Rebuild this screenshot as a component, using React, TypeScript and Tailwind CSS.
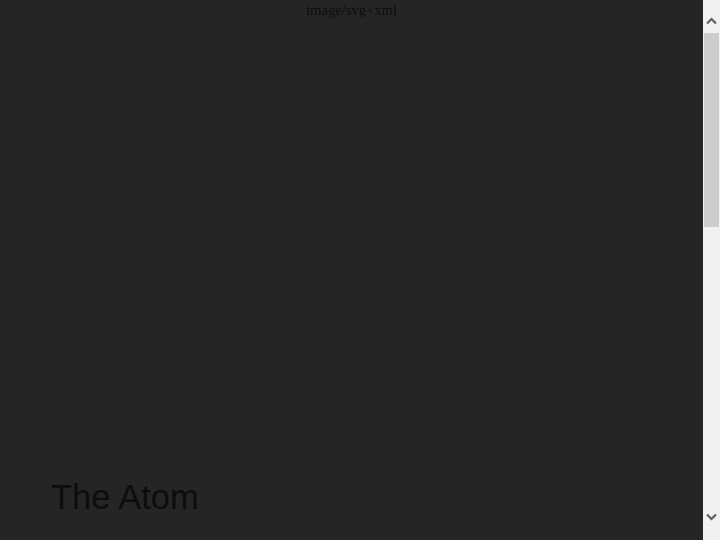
function Chevron({ up }: { up?: boolean }) {
  return (
    <svg width="11" height="8" viewBox="0 0 11 8" className="block">
      <path
        d={up ? "M1 6.5 L5.5 2 L10 6.5" : "M1 1.5 L5.5 6 L10 1.5"}
        fill="none"
        stroke="#606060"
        strokeWidth="2.2"
      />
    </svg>
  );
}

function Scrollbar() {
  return (
    <div className="flex w-[17px] shrink-0 flex-col items-center bg-[#f1f1f1]">
      <div className="flex h-[25px] w-full items-end justify-center">
        <Chevron up />
      </div>
      <div className="mt-[8px] h-[194px] w-[15px] bg-[#cdcdcd]" />
      <div className="flex-1" />
      <div className="flex h-[27px] w-full items-start justify-center">
        <Chevron />
      </div>
    </div>
  );
}

export default function App() {
  return (
    <div className="flex h-[540px] overflow-hidden bg-[#252525]">
      <main className="flex-1 overflow-hidden text-[#0d0d0d]">
        <div className="h-[20px] text-center font-['Liberation_Serif',serif] text-[14.6px] leading-[20px]">
          image/svg+xml
        </div>
        <h1 className="mt-[457px] pl-[51px] font-['Liberation_Sans',Arial,sans-serif] text-[34.5px] font-normal leading-[40px]">
          The Atom
        </h1>
      </main>
      <Scrollbar />
    </div>
  );
}
